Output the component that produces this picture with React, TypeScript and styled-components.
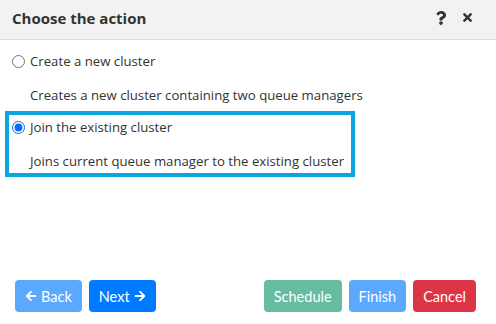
import React, { useState } from 'react';
import styled, { createGlobalStyle } from 'styled-components';
import { FaArrowLeft, FaArrowRight, FaQuestion, FaTimes } from 'react-icons/fa';

const GlobalStyle = createGlobalStyle`
  html, body, #root {
    margin: 0;
    padding: 0;
    height: 100%;
    background: #ffffff;
  }
`;

type Option = {
  id: string;
  label: string;
  description: string;
};

const options: Option[] = [
  {
    id: 'create',
    label: 'Create a new cluster',
    description: 'Creates a new cluster containing two queue managers',
  },
  {
    id: 'join',
    label: 'Join the existing cluster',
    description: 'Joins current queue manager to the existing cluster',
  },
];

export default function App() {
  const [selected, setSelected] = useState('join');

  return (
    <>
      <GlobalStyle />
      <Dialog>
        <Header>
          <Title>Choose the action</Title>
          <HeaderIcons>
            <FaQuestion size={14} />
            <FaTimes size={13} />
          </HeaderIcons>
        </Header>
        <Content>
          {options.map((o) => (
            <OptionBox key={o.id} $active={selected === o.id}>
              <OptionLabel>
                <Radio
                  type="radio"
                  name="action"
                  checked={selected === o.id}
                  onChange={() => setSelected(o.id)}
                />
                {o.label}
              </OptionLabel>
              <Description>{o.description}</Description>
            </OptionBox>
          ))}
        </Content>
        <Footer>
          <ButtonGroup>
            <Button $color="#5aa9ff">
              <FaArrowLeft size={12} /> Back
            </Button>
            <Button $color="#007bff">
              Next <FaArrowRight size={12} />
            </Button>
          </ButtonGroup>
          <ButtonGroup>
            <Button $color="#67bba3">Schedule</Button>
            <Button $color="#5aa9ff">Finish</Button>
            <Button $color="#dc3545">Cancel</Button>
          </ButtonGroup>
        </Footer>
      </Dialog>
    </>
  );
}

const Dialog = styled.div`
  display: flex;
  flex-direction: column;
  height: 100vh;
  font-family: 'Open Sans', 'Noto Sans', sans-serif;
  color: #333;
`;

const Header = styled.div`
  display: flex;
  align-items: center;
  justify-content: space-between;
  height: 35px;
  padding: 0 22px 4px 12px;
  background: #f2f2f2;
  border-bottom: 1px solid #dcdcdc;
`;

const Title = styled.div`
  font-size: 15px;
  font-weight: 700;
  color: #333;
`;

const HeaderIcons = styled.div`
  display: flex;
  align-items: center;
  gap: 13px;
  color: #333;
`;

const Content = styled.div`
  flex: 1;
  display: flex;
  flex-direction: column;
  align-items: flex-start;
  padding: 5px 5px 0;
`;

const OptionBox = styled.div<{ $active: boolean }>`
  display: flex;
  flex-direction: column;
  gap: 14px;
  width: fit-content;
  padding: 2px 7px 2px 3px;
  border: 4px solid ${(p) => (p.$active ? '#0ba5e2' : 'transparent')};
  white-space: nowrap;
`;

const OptionLabel = styled.label`
  display: flex;
  align-items: center;
  gap: 5px;
  height: 20px;
  font-size: 13.2px;
`;

const Radio = styled.input`
  width: 13px;
  height: 13px;
  margin: 0;
  accent-color: #0a6cf5;
`;

const Description = styled.div`
  height: 20px;
  line-height: 20px;
  padding-left: 18px;
  font-size: 13.2px;
`;

const Footer = styled.div`
  display: flex;
  justify-content: space-between;
  padding: 0 20px 12px 15px;
`;

const ButtonGroup = styled.div`
  display: flex;
  gap: 7px;
`;

const Button = styled.button<{ $color: string }>`
  display: flex;
  align-items: center;
  gap: 4px;
  height: 32px;
  padding: 0 10px;
  border: none;
  border-radius: 4px;
  background: ${(p) => p.$color};
  color: #fff;
  font-family: Lato, sans-serif;
  font-size: 14.5px;
  cursor: pointer;
`;
